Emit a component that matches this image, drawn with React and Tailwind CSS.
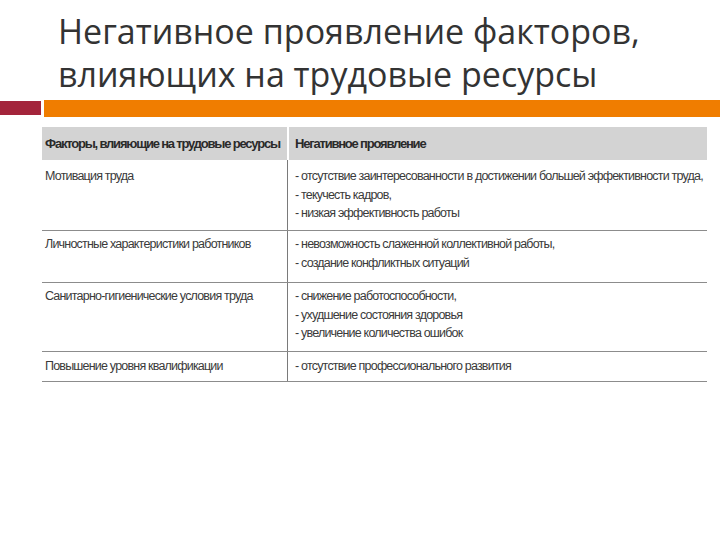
export default function App() {
  const cond = { fontFamily: '"Liberation Sans", Arial, sans-serif' };
  const rows = [
    { h: 'h-[71px]', pt: 'pt-[7px]', left: 'Мотивация труда', right: ['- отсутствие заинтересованности в достижении большей эффективности труда,', '- текучесть кадров,', '- низкая эффективность работы'] },
    { h: 'h-[52px]', pt: 'pt-[4px]', left: 'Личностные характеристики работников', right: ['- невозможность слаженной коллективной работы,', '- создание конфликтных ситуаций'] },
    { h: 'h-[69px]', pt: 'pt-[4px]', left: 'Санитарно-гигиенические условия труда', right: ['- снижение работоспособности,', '- ухудшение состояния здоровья', '- увеличение количества ошибок'] },
    { h: 'h-[30px]', pt: 'pt-[5px]', left: 'Повышение уровня квалификации', right: ['- отсутствие профессионального развития'] },
  ];
  return (
    <div className="w-[720px] h-[540px] bg-white overflow-hidden">
      <div className="pl-[58px] pt-[10px] text-[34px] leading-[43px] text-[#333333]" style={{ fontFamily: '"Open Sans", sans-serif' }}>
        <div className="whitespace-nowrap">Негативное проявление факторов,</div>
        <div className="whitespace-nowrap">влияющих на трудовые ресурсы</div>
      </div>
      <div className="flex items-start mt-[4px] h-[17px]">
        <div className="w-[41px] h-[14px] mt-[1px] bg-[#a3243b]" />
        <div className="ml-[3px] flex-1 h-[17px] bg-[#f07d00]" />
      </div>
      <div className="ml-[42px] mt-[10px] w-[665px] text-[12.5px] tracking-[-0.8px] text-[#3a3a3a] whitespace-nowrap" style={cond}>
        <div className="flex h-[33px]">
          <div className="w-[245px] shrink-0 bg-[#d3d3d3] pl-[3px] flex items-center text-[13px] font-bold tracking-[-1.2px] text-[#2a2a2a]">Факторы, влияющие на трудовые ресурсы</div>
          <div className="w-[2px] shrink-0 bg-white" />
          <div className="flex-1 min-w-0 bg-[#d3d3d3] pl-[6px] flex items-center text-[13px] font-bold tracking-[-1.2px] text-[#2a2a2a]">Негативное проявление</div>
        </div>
        {rows.map((r, i) => (
          <div key={i} className={`flex ${r.h} border-b border-[#8c8c8c]`}>
            <div className={`w-[246px] shrink-0 pl-[3px] ${r.pt} leading-[18.5px] border-r border-[#7a7a7a]`}>{r.left}</div>
            <div className={`flex-1 min-w-0 pl-[7px] ${r.pt} leading-[18.5px]`}>
              {r.right.map((t, j) => (
                <div key={j}>{t}</div>
              ))}
            </div>
          </div>
        ))}
      </div>
    </div>
  );
}
